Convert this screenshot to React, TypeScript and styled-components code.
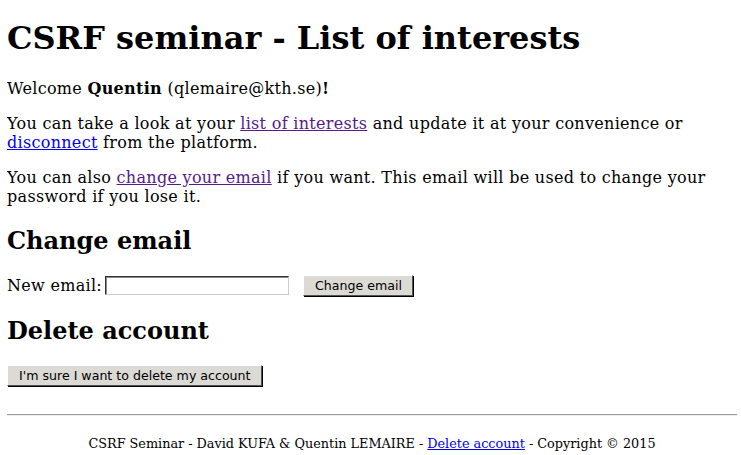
import React from "react";
import styled, { createGlobalStyle } from "styled-components";

const Global = createGlobalStyle`
  html, body { background: #fff; }
  body {
    margin: 8px 4px 8px 7px;
    font-family: "DejaVu Serif", serif;
    font-size: 16px;
    color: #000;
  }
`;

const Title = styled.h1`
  font-size: 32px;
  font-weight: bold;
  margin: 11px 0 22px;
`;

const SubTitle = styled.h2`
  font-size: 24px;
  font-weight: bold;
  margin: 20px 0;
`;

const Para = styled.p`
  margin: 16px 0;
  letter-spacing: 0.3px;
`;

const Link = styled.a<{ $visited?: boolean }>`
  color: ${(p) => (p.$visited ? "#551a8b" : "#0000ee")};
  text-decoration: underline;
`;

const Form = styled.form`
  display: flex;
  align-items: center;
  margin: 16px 0;
`;

const Label = styled.label`
  margin-right: 3px;
  letter-spacing: 0.3px;
`;

const TextInput = styled.input`
  width: 178px;
  height: 15px;
  padding: 1px 2px;
  border-top: 1px solid #333;
  border-left: 1px solid #333;
  border-right: 1px solid #ccc;
  border-bottom: 1px solid #ccc;
  box-shadow: inset 1px 1px 0 #888;
  font-family: "DejaVu Sans", sans-serif;
  font-size: 13px;
  background: #fff;
  margin-right: 14px;
`;

const Button = styled.button`
  font-family: "DejaVu Sans", sans-serif;
  font-size: 12.6px;
  color: #000;
  background: #dcdad5;
  padding: 1px 10px 2px 11px;
  height: 21px;
  border: none;
  border-top: 1px solid #fff;
  border-left: 1px solid #fff;
  border-right: 1px solid #555;
  border-bottom: 1px solid #555;
  box-shadow: 1px 1px 0 #000;
  cursor: pointer;
`;

const Rule = styled.hr`
  border: none;
  border-top: 1px solid #9a9a9a;
  border-bottom: 1px solid #eee;
  margin: 28px 0 0;
`;

const Footer = styled.footer`
  text-align: center;
  font-size: 12.8px;
  padding-top: 20px;
`;

export default function App() {
  return (
    <>
      <Global />
      <Title>CSRF seminar - List of interests</Title>
      <Para>
        Welcome <b>Quentin</b> (qlemaire@kth.se)<b>!</b>
      </Para>
      <Para>
        You can take a look at your <Link $visited href="#">list of interests</Link> and update it at your convenience or{" "}
        <Link href="#">disconnect</Link> from the platform.
      </Para>
      <Para>
        You can also <Link $visited href="#">change your email</Link> if you want. This email will be used to change your password if you lose it.
      </Para>
      <SubTitle>Change email</SubTitle>
      <Form onSubmit={(e) => e.preventDefault()}>
        <Label>New email:</Label>
        <TextInput type="text" />
        <Button type="submit">Change email</Button>
      </Form>
      <SubTitle>Delete account</SubTitle>
      <Form onSubmit={(e) => e.preventDefault()}>
        <Button type="submit">I'm sure I want to delete my account</Button>
      </Form>
      <Rule />
      <Footer>
        CSRF Seminar - David KUFA &amp; Quentin LEMAIRE - <Link href="#">Delete account</Link> - Copyright © 2015
      </Footer>
    </>
  );
}
